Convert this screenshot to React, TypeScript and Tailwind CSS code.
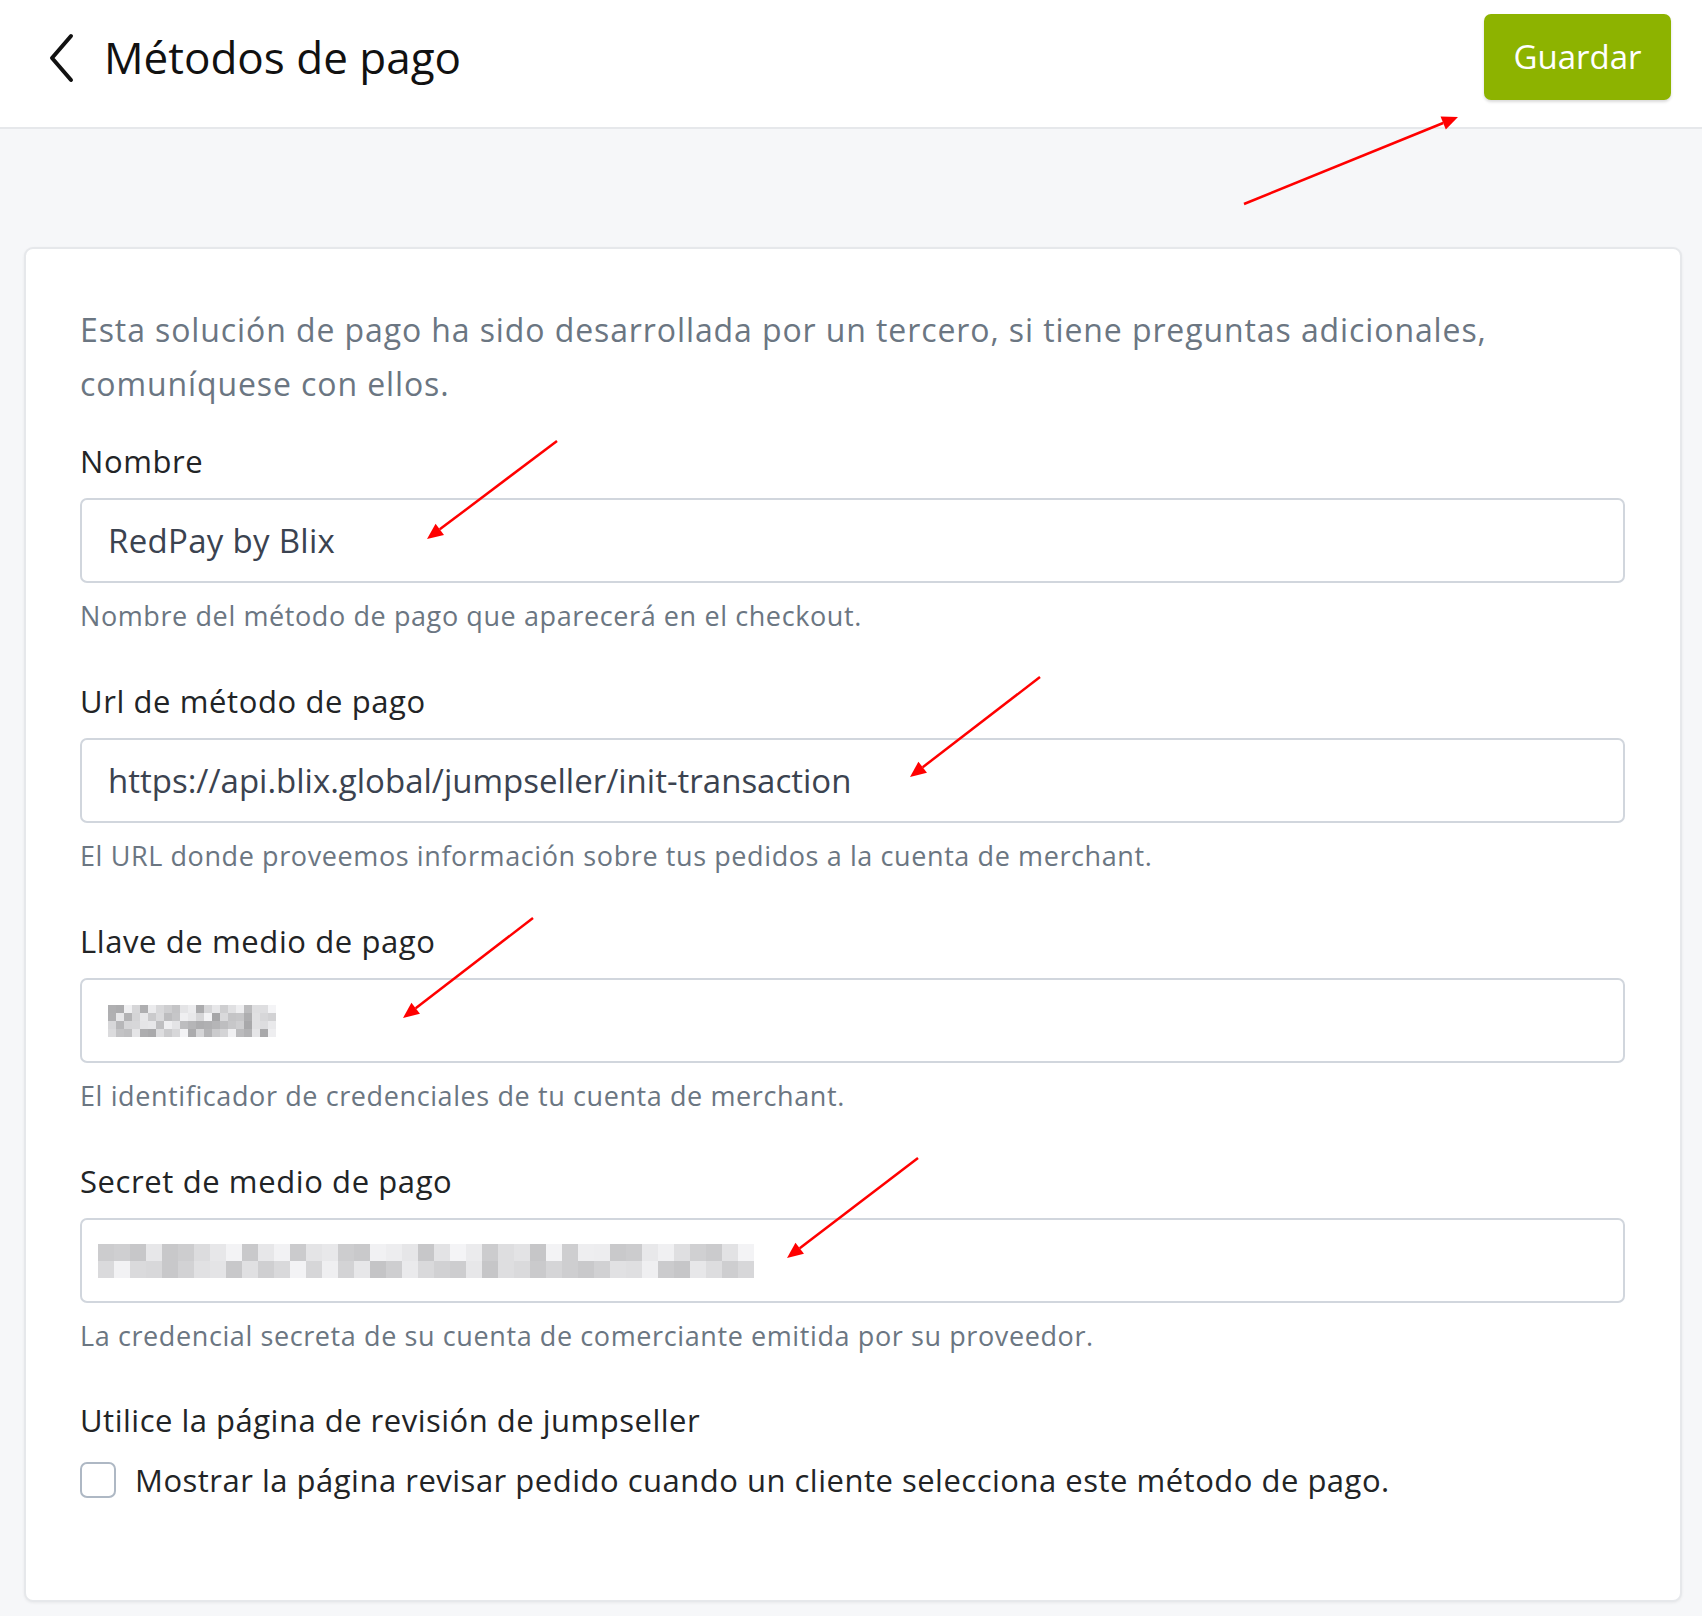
import React from "react";

function Pixels({ cols, rows, cw, ch, seed, dark }: { cols: number; rows: number; cw: number; ch: number; seed: number; dark: number }) {
  let s = seed;
  const rnd = () => {
    s = (s * 9301 + 49297) % 233280;
    return s / 233280;
  };
  const rects: React.ReactNode[] = [];
  for (let r = 0; r < rows; r++) {
    for (let c = 0; c < cols; c++) {
      const v = Math.round(246 - rnd() * dark);
      rects.push(
        <rect key={`${r}-${c}`} x={c * cw} y={r * ch} width={cw} height={ch} fill={`rgb(${v},${v},${v + 2})`} />
      );
    }
  }
  return (
    <svg width={cols * cw} height={rows * ch} viewBox={`0 0 ${cols * cw} ${rows * ch}`}>
      {rects}
    </svg>
  );
}

function Arrow({ x1, y1, x2, y2 }: { x1: number; y1: number; x2: number; y2: number }) {
  const ang = Math.atan2(y2 - y1, x2 - x1);
  const L = 16;
  const W = 7;
  const bx = x2 - L * Math.cos(ang);
  const by = y2 - L * Math.sin(ang);
  const px = -Math.sin(ang) * W;
  const py = Math.cos(ang) * W;
  return (
    <g>
      <line x1={x1} y1={y1} x2={bx} y2={by} stroke="#ff0000" strokeWidth={2.5} />
      <polygon points={`${x2},${y2} ${bx + px},${by + py} ${bx - px},${by - py}`} fill="#ff0000" />
    </g>
  );
}

function Field({
  label,
  help,
  children,
  first,
}: {
  label: string;
  help: string;
  children: React.ReactNode;
  first?: boolean;
}) {
  return (
    <div className={first ? "mt-[32px]" : "mt-[50px]"}>
      <div className="text-[31px] leading-[36px] tracking-[0.6px] text-[#222426]">{label}</div>
      <div className="mt-[19px] h-[85px] rounded-[7px] border-2 border-[#d1d6dd] bg-white flex items-center pl-[26px] text-[33px] text-[#3b4350]">
        {children}
      </div>
      <div className="mt-[16px] text-[27px] leading-[34px] tracking-[0.6px] text-[#6b7682]">{help}</div>
    </div>
  );
}

export default function App() {
  return (
    <div className="relative min-h-[1616px] bg-[#f6f7f9] font-['Open_Sans',sans-serif]">
      <header className="h-[129px] bg-white border-b-2 border-[#e6e8eb] flex items-start justify-between pl-[44px] pr-[31px]">
        <div className="flex items-center mt-[33px] gap-[26px]">
          <svg width="34" height="50" viewBox="0 0 34 50" fill="none">
            <path d="M27 3 L8 25 L27 47" stroke="#111" strokeWidth="4" strokeLinecap="round" strokeLinejoin="round" />
          </svg>
          <h1 className="text-[44px] leading-[52px] text-[#111] -mt-[2px]">Métodos de pago</h1>
        </div>
        <button className="mt-[14px] w-[187px] h-[86px] rounded-[7px] bg-[#8db300] text-white text-[33px] shadow-[0_2px_3px_rgba(0,0,0,0.15)]">
          Guardar
        </button>
      </header>

      <div className="mt-[118px] ml-[24px] mr-[20px] bg-white rounded-[9px] border-2 border-[#e6e8eb] shadow-[0_1px_3px_rgba(0,0,0,0.06)] pl-[54px] pr-[55px] pt-[54px] pb-[100px]">
        <p className="text-[32px] leading-[54px] tracking-[0.9px] text-[#6b7682] max-w-[1460px]">
          Esta solución de pago ha sido desarrollada por un tercero, si tiene preguntas adicionales, comuníquese con ellos.
        </p>

        <Field first label="Nombre" help="Nombre del método de pago que aparecerá en el checkout.">
          <span className="tracking-[0.3px]">RedPay by Blix</span>
        </Field>
        <Field label="Url de método de pago" help="El URL donde proveemos información sobre tus pedidos a la cuenta de merchant.">
          https://api.blix.global/jumpseller/init-transaction
        </Field>
        <Field label="Llave de medio de pago" help="El identificador de credenciales de tu cuenta de merchant.">
          <Pixels cols={21} rows={4} cw={8} ch={8} seed={17} dark={80} />
        </Field>
        <Field label="Secret de medio de pago" help="La credencial secreta de su cuenta de comerciante emitida por su proveedor.">
          <div className="-ml-[10px]">
            <Pixels cols={41} rows={2} cw={16} ch={17} seed={91} dark={50} />
          </div>
        </Field>

        <div className="mt-[49px] text-[31px] leading-[36px] tracking-[0.5px] text-[#222426]">Utilice la página de revisión de jumpseller</div>
        <label className="mt-[22px] flex items-center gap-[19px]">
          <span className="w-[36px] h-[36px] rounded-[7px] border-2 border-[#aeb8c4] bg-white shrink-0"></span>
          <span className="text-[31px] leading-[40px] tracking-[0.5px] text-[#222426]">
            Mostrar la página revisar pedido cuando un cliente selecciona este método de pago.
          </span>
        </label>
      </div>

      <svg className="absolute left-0 top-0 pointer-events-none" width="1702" height="1616">
        <Arrow x1={1244} y1={204} x2={1458} y2={117} />
        <Arrow x1={557} y1={441} x2={427} y2={539} />
        <Arrow x1={1040} y1={677} x2={910} y2={777} />
        <Arrow x1={533} y1={918} x2={403} y2={1018} />
        <Arrow x1={918} y1={1158} x2={787} y2={1258} />
      </svg>
    </div>
  );
}
